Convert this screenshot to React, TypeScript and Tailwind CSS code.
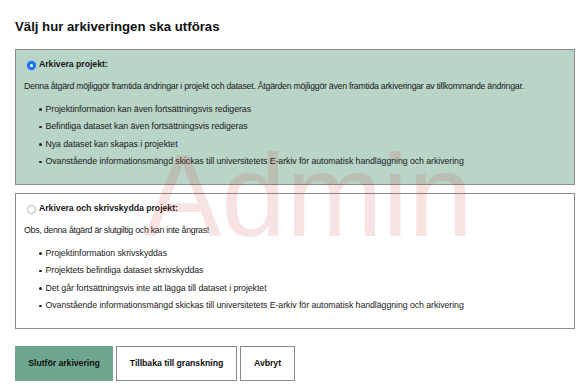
import React, { useState } from 'react';

const archiveItems = [
  'Projektinformation kan även fortsättningsvis redigeras',
  'Befintliga dataset kan även fortsättningsvis redigeras',
  'Nya dataset kan skapas i projektet',
  'Ovanstående informationsmängd skickas till universitetets E-arkiv för automatisk handläggning och arkivering',
];

const lockItems = [
  'Projektinformation skrivskyddas',
  'Projektets befintliga dataset skrivskyddas',
  'Det går fortsättningsvis inte att lägga till dataset i projektet',
  'Ovanstående informationsmängd skickas till universitetets E-arkiv för automatisk handläggning och arkivering',
];

function Radio({ checked }: { checked: boolean }) {
  return checked ? (
    <span className="flex h-[9px] w-[9px] shrink-0 items-center justify-center rounded-full bg-[#1a73e8] ring-1 ring-[#9cc3f5]">
      <span className="h-[3px] w-[3px] rounded-full bg-white" />
    </span>
  ) : (
    <span className="h-[9px] w-[9px] shrink-0 rounded-full border border-[#b5b5b5] bg-white" />
  );
}

function Option({
  checked,
  title,
  intro,
  items,
  onSelect,
}: {
  checked: boolean;
  title: string;
  intro: string;
  items: string[];
  onSelect: () => void;
}) {
  return (
    <div
      onClick={onSelect}
      className={
        'h-[136px] border border-[#8c8c8c] px-[8px] pt-[10px] ' +
        (checked ? 'bg-[#b9d5c7]' : 'bg-white')
      }
    >
      <div className="flex h-[10px] items-center gap-[3px] pl-[3px]">
        <Radio checked={checked} />
        <span className="font-bold">{title}</span>
      </div>
      <p className="mt-[11px] leading-[10px] whitespace-nowrap tracking-[-0.25px]">{intro}</p>
      <ul className="mt-[13.5px] flex flex-col gap-[7.5px] pl-[15px]">
        {items.map((item) => (
          <li key={item} className="flex h-[10px] items-center gap-[4px] whitespace-nowrap">
            <span className="h-[2.5px] w-[2.5px] shrink-0 rounded-full bg-[#222]" />
            {item}
          </li>
        ))}
      </ul>
    </div>
  );
}

export default function App() {
  const [mode, setMode] = useState('archive');

  return (
    <div className="relative h-[385px] w-[585px] overflow-hidden bg-white px-[15px] pt-[18px] text-[8.75px] tracking-[-0.05px] text-[#1a1a1a] [font-family:'Liberation_Sans',Arial,sans-serif]">
      <h1 className="text-[13.2px] leading-[18px] tracking-normal font-bold text-[#111]">
        Välj hur arkiveringen ska utföras
      </h1>

      <div className="mt-[13px] flex w-[560px] flex-col gap-[8px]">
        <Option
          checked={mode === 'archive'}
          title="Arkivera projekt:"
          intro="Denna åtgärd möjliggör framtida ändringar i projekt och dataset. Åtgärden möjliggör även framtida arkiveringar av tillkommande ändringar."
          items={archiveItems}
          onSelect={() => setMode('archive')}
        />
        <Option
          checked={mode === 'lock'}
          title="Arkivera och skrivskydda projekt:"
          intro="Obs, denna åtgärd är slutgiltig och kan inte ångras!"
          items={lockItems}
          onSelect={() => setMode('lock')}
        />
      </div>

      <div className="mt-[17px] flex gap-[3px] font-bold">
        <button className="h-[35px] w-[98px] border border-[#6ea58c] bg-[#6fa68e] text-[#111]">
          Slutför arkivering
        </button>
        <button className="h-[35px] w-[121px] border border-[#8c8c8c] bg-white text-[#111]">
          Tillbaka till granskning
        </button>
        <button className="h-[35px] w-[55px] border border-[#8c8c8c] bg-white text-[#111]">
          Avbryt
        </button>
      </div>

      <div className="pointer-events-none absolute left-[144px] top-[131px] text-[116px] leading-[130px] tracking-normal text-[rgba(200,40,40,0.13)] select-none">
        Admin
      </div>
    </div>
  );
}
